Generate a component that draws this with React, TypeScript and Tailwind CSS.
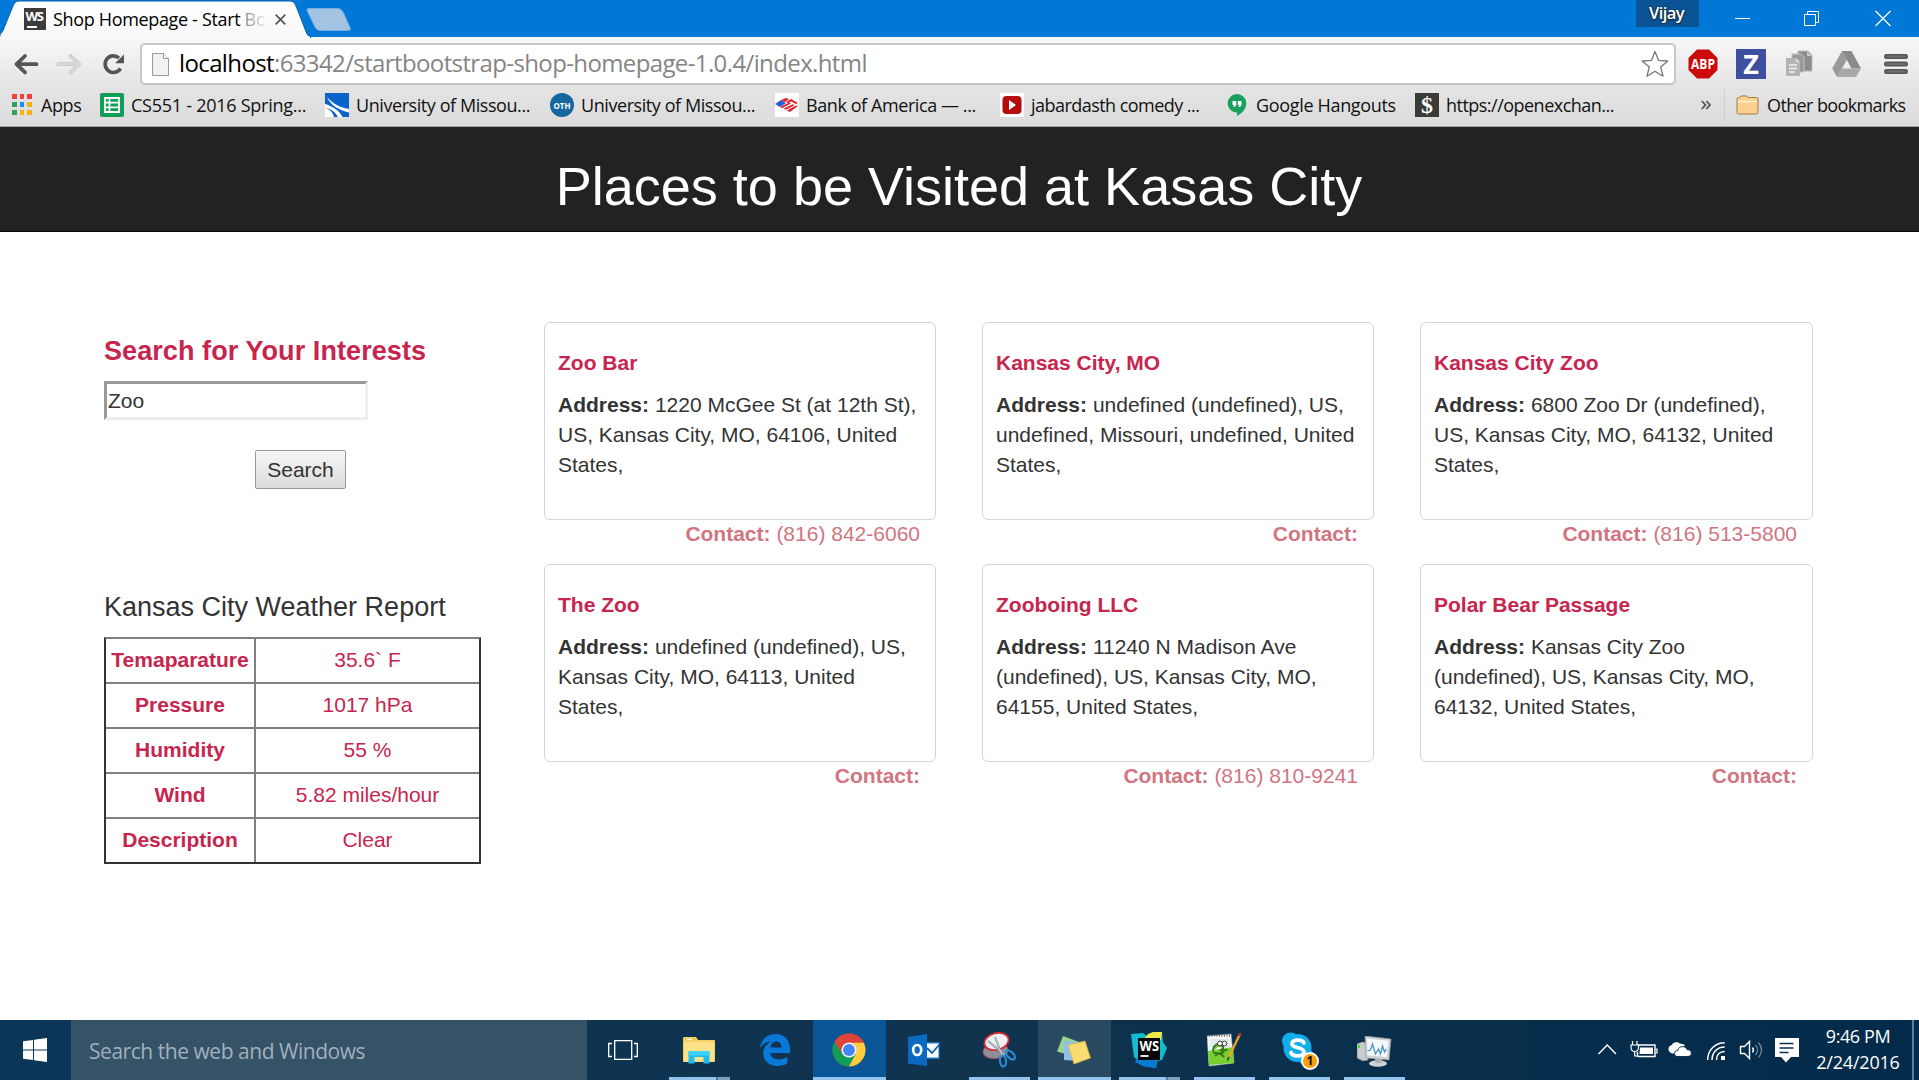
import type { ReactNode } from "react";

const places = [
  { name: "Zoo Bar", address: "1220 McGee St (at 12th St), US, Kansas City, MO, 64106, United States,", contact: "(816) 842-6060" },
  { name: "Kansas City, MO", address: "undefined (undefined), US, undefined, Missouri, undefined, United States,", contact: "" },
  { name: "Kansas City Zoo", address: "6800 Zoo Dr (undefined), US, Kansas City, MO, 64132, United States,", contact: "(816) 513-5800" },
  { name: "The Zoo", address: "undefined (undefined), US, Kansas City, MO, 64113, United States,", contact: "" },
  { name: "Zooboing LLC", address: "11240 N Madison Ave (undefined), US, Kansas City, MO, 64155, United States,", contact: "(816) 810-9241" },
  { name: "Polar Bear Passage", address: "Kansas City Zoo (undefined), US, Kansas City, MO, 64132, United States,", contact: "" },
];

const weather = [
  ["Temaparature", "35.6` F"],
  ["Pressure", "1017 hPa"],
  ["Humidity", "55 %"],
  ["Wind", "5.82 miles/hour"],
  ["Description", "Clear"],
];

/* ---------- Browser chrome ---------- */

function WsFavicon() {
  return (
    <div className="relative h-[22px] w-[22px] shrink-0 bg-[#3c3c3c]">
      <span className="absolute left-[1.5px] top-px font-['Open_Sans',sans-serif] text-[13px] font-bold leading-[14px] tracking-[-1.2px] text-white">WS</span>
      <span className="absolute bottom-[2.5px] left-[3px] h-[1.5px] w-[10px] bg-white" />
    </div>
  );
}

function TitleBar() {
  return (
    <div className="relative flex h-[37px] items-start bg-[#0078d7]">
      <svg className="absolute left-0 top-0" width="360" height="38" viewBox="0 0 360 38">
        <defs>
          <linearGradient id="tab" x1="0" y1="0" x2="0" y2="1">
            <stop offset="0" stopColor="#fff" />
            <stop offset="1" stopColor="#f8f8f8" />
          </linearGradient>
        </defs>
        <path d="M0 37.5V34c2-1 3-3 4-6L13 6c1.500-3.500 3-5 6-5h271c3 0 4.500 1.500 6 5l9 23c1.500 4 2.500 7 6 8.500z" fill="url(#tab)" stroke="#0a5fa8" strokeWidth="1" />
        <path d="M0 36.500h310V38H0z" fill="#f8f8f8" />
        <path d="M308.500 8.500H337c3.500 0 5 1.500 6.500 4.500l6.500 14.500c.8 2-.2 3-2 3h-27.500c-3 0-4.500-1.200-6-4.500l-7-14.500c-.9-2-.5-3 1-3z" fill="#a3c3e2" stroke="#79acdc" />
      </svg>
      <div className="relative ml-[24px] mt-[8px] flex h-[22px] items-center">
        <WsFavicon />
        <div className="ml-[7px] w-[211px] overflow-hidden whitespace-pre text-[18px] leading-[22px] tracking-[-0.34px] text-black">
          Shop Homepage - Start <span className="bg-gradient-to-r from-[#888] to-[#eee] bg-clip-text text-transparent">Bo</span>
        </div>
        <svg className="ml-[11px]" width="11" height="11" viewBox="0 0 11 11"><path d="M.7.700l9.600 9.600M10.300.700L.7 10.300" stroke="#555" strokeWidth="1.700" /></svg>
      </div>
      <div className="relative ml-auto mr-[36px] flex h-[27px] w-[63px] justify-center bg-[#0a5496]">
        <span className="-ml-[2px] text-[16.500px] font-semibold leading-[25px] tracking-[-0.6px] text-white [text-shadow:0_0_2px_#222,0_1px_2px_#222]">Vijay</span>
      </div>
      <svg className="relative mr-[28px]" width="156" height="37" viewBox="0 0 156 37" fill="none" stroke="#fff" strokeWidth="1">
        <path d="M0 18.500h15" />
        <path d="M69.500 14.500h11v11h-11zM72.500 14.500v-3h11v11h-3" />
        <path d="M140.500 11l15 15M155.500 11l-15 15" strokeWidth="1.200" />
      </svg>
    </div>
  );
}

function Toolbar() {
  return (
    <div className="flex h-[53px] items-start bg-gradient-to-b from-[#f8f8f8] to-[#e3e3e3]">
      <svg className="shrink-0" width="140" height="53" viewBox="0 0 140 53" fill="none">
        <path d="M36.500 27.200H18M25 19l-8.500 8.200 8.500 8.200" stroke="#555" strokeWidth="3.800" strokeLinecap="round" strokeLinejoin="round" />
        <path d="M58.500 27.200H78M70.500 19l8.500 8.200-8.500 8.200" stroke="#c4c4c4" strokeWidth="3.800" strokeLinecap="round" strokeLinejoin="round" />
        <path d="M58.500 27.200H78M70.500 19l8.500 8.200-8.500 8.200" stroke="#dadada" strokeWidth="2.200" strokeLinecap="round" strokeLinejoin="round" />
        <path d="M120.500 31.500a8.300 8.300 0 1 1-1.500-10.500" stroke="#555" strokeWidth="3.600" />
        <path d="M124 17.500v8.700h-9z" fill="#555" />
      </svg>
      <div className="mt-[6px] flex h-[42px] w-[1536px] shrink-0 items-center rounded-[5px] border-2 border-[#c6c6c6] bg-white">
        <svg className="ml-[10px]" width="17" height="23" viewBox="0 0 17 23"><path d="M.5.500h11l5 5v17H.5z" fill="#f2f2f2" stroke="#9a9a9a" /><path d="M11.500.500v5h5" fill="#fff" stroke="#9a9a9a" /></svg>
        <div className="-mt-[2px] ml-[10px] whitespace-nowrap text-[24px] leading-[36px] tracking-[-0.62px] text-[#858585]">
          <span className="text-black">localhost</span>:63342/startbootstrap-shop-homepage-1.0.4/index.html
        </div>
        <svg className="ml-auto mr-[5px]" width="28" height="28" viewBox="0 0 28 28"><path d="M14 1.500l3.600 8.900 9.200.6-7.100 6 2.300 9.200-8-5-8 5 2.300-9.200-7.100-6 9.200-.6z" fill="#fff" stroke="#777" strokeWidth="1.300" strokeLinejoin="round" /></svg>
      </div>
      <div className="ml-[12px] mt-[12px] flex h-[30px] items-center">
        <svg width="30" height="30" viewBox="0 0 30 30">
          <path d="M9 .5h12l8.500 8.500v12L21 29.500H9L.5 21V9z" fill="#cc0a0a" />
          <text x="15" y="19.700" textAnchor="middle" textLength="24" lengthAdjust="spacingAndGlyphs" fontFamily="Open Sans" fontWeight="700" fontSize="13.500" fill="#fff">ABP</text>
        </svg>
        <div className="ml-[18px] flex h-[30px] w-[30px] items-center justify-center bg-[#3f4fa0] text-[27px] font-bold leading-[30px] text-white">Z</div>
        <svg className="ml-[19px]" width="28" height="28" viewBox="0 0 28 28">
          <path d="M13 1h10l4 4v16H13z" fill="#8c8c8c" stroke="#b9b9b9" />
          <path d="M22 1v5h5" fill="#c8c8c8" />
          <path d="M7 4h9l3 3v15H7z" fill="#9a9a9a" stroke="#c2c2c2" />
          <path d="M1 8h10l4 4v14H1z" fill="#b4b4b4" />
          <path d="M11 8v4h4" fill="#dedede" />
          <path d="M4 15h8M4 18.500h8M4 22h6" stroke="#eee" strokeWidth="1.600" />
        </svg>
        <svg className="ml-[19px]" width="29" height="26" viewBox="0 0 29 26">
          <path d="M10 0l5 8.500L5.200 26 .2 17.400z" fill="#9a9a9a" />
          <path d="M10 0h9.500l9.500 17.400h-9.500z" fill="#8b8b8b" />
          <path d="M9.700 17.400H29L24 26H5.200z" fill="#a9a9a9" />
        </svg>
        <svg className="ml-[23px]" width="24" height="22" viewBox="0 0 24 22"><path d="M2.500 3.500h19M2.500 11h19M2.500 18.500h19" stroke="#555" strokeWidth="5" strokeLinecap="round" /><path d="M3 3.500h18M3 11h18M3 18.500h18" stroke="#6e6e6e" strokeWidth="2" strokeLinecap="round" /></svg>
      </div>
    </div>
  );
}

function Bookmark({ width, tracking, label, children }: { width: string; tracking: string; label: string; children: ReactNode }) {
  return (
    <div className={`flex shrink-0 items-center gap-[7px] ${width}`}>
      {children}
      <span className={`-mt-px whitespace-nowrap ${tracking}`}>{label}</span>
    </div>
  );
}

function BookmarksBar() {
  return (
    <div className="flex h-[37px] items-start border-b border-[#a0a0a0] bg-gradient-to-b from-[#e3e3e3] to-[#dcdcdc] text-[18px] leading-[24px] text-[#111]">
      <div className="mt-[3px] flex h-[24px] w-full items-center">
        <div className="ml-[12px] flex w-[88px] shrink-0 items-center gap-[9px]">
          <div className="-mt-px grid w-[20px] grid-cols-3 gap-[3px]">
            <i className="h-[5px] bg-[#f4403a]" /><i className="h-[5px] bg-[#f4403a]" /><i className="h-[5px] bg-[#f4403a]" />
            <i className="h-[5px] bg-[#2ea060]" /><i className="h-[5px] bg-[#1e88f5]" /><i className="h-[5px] bg-[#fbaf0a]" />
            <i className="h-[5px] bg-[#2ea060]" /><i className="h-[5px] bg-[#fbaf0a]" /><i className="h-[5px] bg-[#fbaf0a]" />
          </div>
          <span className="-mt-px tracking-[-0.4px]">Apps</span>
        </div>
        <Bookmark width="w-[225px]" tracking="tracking-[-0.26px]" label="CS551 - 2016 Spring...">
          <svg width="24" height="24" viewBox="0 0 24 24"><rect width="24" height="24" rx="2" fill="#0f9d58" /><path d="M5 5h14v14H5zM5 9.700h14M5 14.300h14M9.500 5v14" fill="none" stroke="#fff" strokeWidth="1.800" /></svg>
        </Bookmark>
        <Bookmark width="w-[225px]" tracking="tracking-[-0.43px]" label="University of Missou...">
          <svg width="24" height="24" viewBox="0 0 24 24"><path d="M0 0h24v24H0z" fill="#0a63c9" /><path d="M2 4c6 7 13 10.500 22 12v3.500C14 17 6 13 2 4z" fill="#fff" /><path d="M0 11c7 2 14 6 17.500 13H13C10 18 5 15.500 0 15z" fill="#fff" /><path d="M0 14.500c5 2 8 5 9 9.500H0z" fill="#fff" /></svg>
        </Bookmark>
        <Bookmark width="w-[225px]" tracking="tracking-[-0.43px]" label="University of Missou...">
          <svg width="24" height="24" viewBox="0 0 24 24"><circle cx="12" cy="12" r="12" fill="#14689f" /><text x="12" y="15.500" textAnchor="middle" textLength="17" lengthAdjust="spacingAndGlyphs" fontFamily="Open Sans" fontWeight="700" fontSize="9" fill="#fff">OTH</text></svg>
        </Bookmark>
        <Bookmark width="w-[225px]" tracking="tracking-[-0.42px]" label="Bank of America — ...">
          <svg width="24" height="24" viewBox="0 0 24 24"><path d="M0 0h24v24H0z" fill="#fff" /><path d="M0 11l6-4 5 3-6 4z" fill="#2a5bd0" /><path d="M6 7l5-2 3 1-4 3zM11 9l5-3 7 4-2 1-5-2.500L13 10z" fill="#e0202c" /><path d="M5 14l9-4.500 2 1L7.500 15zM8.500 15.800l9-4.500 2 1-8.500 4.400zM12 17.500l8-4.500 3.500-.5L15 19z" fill="#e0202c" /></svg>
        </Bookmark>
        <Bookmark width="w-[227px]" tracking="tracking-[-0.54px]" label="jabardasth comedy ...">
          <svg width="24" height="24" viewBox="0 0 24 24"><path d="M0 0h24v24H0z" fill="#fff" /><rect x="2.500" y="3" width="19" height="18" rx="4" fill="#b50d0d" /><path d="M9 7l7 5-7 5z" fill="#fff" /></svg>
        </Bookmark>
        <Bookmark width="w-[188px]" tracking="tracking-[-0.33px]" label="Google Hangouts">
          <svg width="22" height="24" viewBox="0 0 22 24"><path d="M10 1a9.300 9.300 0 0 0-9.300 9.300c0 5.200 4.300 9.200 9.300 9.200V23c5.500-2.700 9.300-7.600 9.300-12.700A9.300 9.300 0 0 0 10 1z" fill="#17a05e" /><path d="M5.500 8h3.700v4.200L7.500 14H6.200l.8-2H5.500zM10.800 8h3.700v4.200L12.800 14h-1.300l.8-2h-1.500z" fill="#fff" /></svg>
        </Bookmark>
        <Bookmark width="w-[286px]" tracking="tracking-[-0.52px]" label="https://openexchan...">
          <span className="flex h-[24px] w-[24px] items-center justify-center bg-[#3a3a36] font-['Liberation_Serif',serif] text-[24px] font-bold leading-[24px] text-white">$</span>
        </Bookmark>
        <svg className="shrink-0" width="10" height="10" viewBox="0 0 10 10" fill="none" stroke="#555" strokeWidth="1.800"><path d="M.8 1l3.700 4L.8 9M5.300 1L9 5 5.300 9" /></svg>
        <span className="ml-[13px] h-[32px] w-px shrink-0 bg-[#c4d0dc]" />
        <svg className="ml-[11px] shrink-0" width="23" height="20" viewBox="0 0 23 20"><path d="M1 4c0-1 .5-1.500 1.500-1.500H4L5 1h6l1 1.500h8.500c1 0 1.500.5 1.500 1.500v13.500c0 1-.5 1.500-1.500 1.500h-18C1.500 19 1 18.500 1 17.500z" fill="#f9d08e" stroke="#a57a45" /><path d="M2 6.500h19" stroke="#fce8c2" strokeWidth="2" /></svg>
        <span className="-mt-px ml-[8px] whitespace-nowrap tracking-[-0.62px]">Other bookmarks</span>
      </div>
    </div>
  );
}

/* ---------- Page ---------- */

function Sidebar() {
  return (
    <div className="w-[440px] shrink-0">
      <h3 className="mt-[14px] text-[27px] font-bold leading-[30px] tracking-[0.08px] text-[#c7254e]">Search for Your Interests</h3>
      <div className="mt-[15px] flex h-[39px] w-[264px] items-center border-[3px] border-b-[#eee] border-l-[#9a9a9a] border-r-[#eee] border-t-[#9a9a9a] bg-white pl-px text-[21px] leading-[30px] text-[#333]">Zoo</div>
      <button className="ml-[151px] mt-[30px] flex h-[39px] w-[91px] items-center justify-center rounded-[2px] border border-[#999] bg-gradient-to-b from-[#f6f6f6] to-[#dcdcdc] text-[21px] leading-[30px] text-[#333]">Search</button>
      <h3 className="mt-[103px] text-[27px] leading-[30px] text-[#333]">Kansas City Weather Report</h3>
      <div className="mt-[15px] grid w-[377px] grid-cols-[150px_1fr] border-2 border-[#333] border-t-[#808080] text-center text-[21px] leading-[30px] text-[#c7254e]">
        {weather.map(([label, value], i) => {
          const last = i === weather.length - 1;
          const cell = last ? "h-[43px] pt-[6px]" : "h-[45px] border-b-2 border-[#808080] pt-[6px]";
          return [
            <div key={label} className={`border-r-2 border-r-[#808080] font-bold ${cell}`}>{label}</div>,
            <div key={label + "v"} className={cell}>{value}</div>,
          ];
        })}
      </div>
    </div>
  );
}

function PlaceCard({ name, address, contact }: (typeof places)[number]) {
  return (
    <div className="h-[242px]">
      <div className="h-[198px] rounded-[6px] border border-[#d6d6d6] px-[13px] pt-[25px] text-[21px] leading-[30px] text-[#333]">
        <h4 className="font-bold text-[#c7254e]">{name}</h4>
        <p className="mt-[12px]"><b>Address:</b> {address}</p>
      </div>
      <p className="-mt-[1px] pr-[16px] text-right text-[21px] leading-[30px] text-[#d17581]"><b>Contact:</b>{contact && " " + contact}</p>
    </div>
  );
}

/* ---------- Taskbar ---------- */

function Task({ tile = "", line = "", split = false, children }: { tile?: string; line?: string; split?: boolean; children?: ReactNode }) {
  return (
    <div className={`relative mr-[2px] flex h-[60px] w-[73px] shrink-0 items-center justify-center ${tile}`}>
      {children}
      {line && (
        <span className={`absolute bottom-0 flex h-[3px] ${line}`}>
          <i className="flex-1 bg-[#93c4ee]" />
          {split && <><i className="w-[2px] bg-[#587993]" /><i className="w-[12px] bg-[#7ba0bd]" /></>}
        </span>
      )}
    </div>
  );
}

function Taskbar() {
  return (
    <div className="flex h-[60px] items-start bg-gradient-to-r from-[#0c3658] via-[#10334e] to-[#022a4a] text-white">
      <div className="flex h-[60px] w-[71px] items-center justify-center pr-[2px]">
        <svg width="24" height="24" viewBox="0 0 24 24" fill="#fff"><path d="M0 3.300L10 1.900v9.500H0zM11 1.800L24 0v11.400H11zM0 12.500h10V22L0 20.700zM11 12.500h13V24l-13-1.800z" /></svg>
      </div>
      <div className="flex h-[60px] w-[516px] items-center bg-[#355266] pl-[18px] text-[21px] tracking-[-0.46px] text-[#a0b0bd]"><span className="pt-[3px]">Search the web and Windows</span></div>
      <div className="mr-[3px] flex h-[60px] w-[73px] shrink-0 items-center justify-center">
        <svg className="-ml-[2px]" width="30" height="20" viewBox="0 0 30 20" fill="none" stroke="#fff" strokeWidth="1.300"><path d="M6.700.7h17v18.600h-17zM4 3.500H.7v13H4M26 3.500h3.300v13H26" /></svg>
      </div>
      <Task line="left-[6px] w-[61px]" split>
        <svg className="ml-[-1px] mt-[1px]" width="32" height="27" viewBox="0 0 32 27"><path d="M0 1.500C0 .7.500 0 1.500 0H13l2 3h16c.6 0 1 .5 1 1v20c0 .6-.4 1-1 1H1c-.600 0-1-.4-1-1z" fill="#f5cf60" /><path d="M1 5h30v19.500H1z" fill="#fbe28a" /><path d="M2 1.500h10l1 1.500H2z" fill="#f7b928" /><path d="M3.500 1.700h6v1.500h-6z" fill="#fff" /><path d="M5.500 26.500V15.500c0-1 .5-1.500 1.500-1.500h18c1 0 1.500.5 1.500 1.500v11H20.500V20h-9v6.500z" fill="#1fbcf0" /><path d="M5.500 18.500V15.500c0-1 .5-1.500 1.500-1.500h18c1 0 1.500.5 1.500 1.500v3z" fill="#3fd0fa" /></svg>
      </Task>
      <Task>
        <svg width="30" height="32" viewBox="0 0 30 32"><path d="M0 14.200C1.200 5.500 7.300 0 15.600 0 24.600 0 30 6.600 30 14.800v4.300H10.300c.3 4.400 4.200 6.300 8.700 6.300 3.100 0 6-.9 8.400-2.400v6.600c-2.700 1.600-6.200 2.400-9.700 2.400C9 32 3.300 27.200 3.300 19.300c0-5.200 2.900-9.400 8.400-12.100C6.600 7.400 2.600 10 0 14.200zM10.400 13.600h11.200c-.1-3.700-1.900-6-5.300-6-3.200 0-5.400 2.300-5.900 6z" fill="#0a78d9" /></svg>
      </Task>
      <Task tile="bg-[#0a5595]" line="left-0 w-full">
        <svg className="ml-[-1px]" width="34" height="34" viewBox="0 0 34 34"><circle cx="17" cy="17" r="16.500" fill="#db4437" /><path d="M17 17L2.700 8.750A16.500 16.500 0 0 0 17 33.500L24.100 21z" fill="#0f9d58" /><path d="M17 9.500h14.700A16.500 16.500 0 0 1 17 33.500L23.700 21z" fill="#ffcd40" /><path d="M2.700 8.750L10.200 21 17 17l-1-7.500h15.700A16.500 16.500 0 0 0 2.700 8.750z" fill="#db4437" /><circle cx="17" cy="17" r="7.600" fill="#f1f1f1" /><circle cx="17" cy="17" r="5.900" fill="#4285f4" /></svg>
      </Task>
      <Task>
        <svg className="ml-[-2px]" width="32" height="32" viewBox="0 0 32 32"><path d="M18 8h13.500v17H18z" fill="#1677c8" /><path d="M19 9.500h11.500v14H19z" fill="#fff" /><path d="M19 14l5 5 7-8" fill="none" stroke="#0f63b0" strokeWidth="1.800" /><path d="M0 3l19-3v32L0 29.500z" fill="#0a6ac0" /><ellipse cx="9.200" cy="16" rx="4" ry="5" fill="none" stroke="#fff" strokeWidth="2.700" /></svg>
      </Task>
      <Task line="left-[6px] w-[61px]">
        <svg className="ml-[-1px]" width="35" height="36" viewBox="0 0 35 36"><ellipse cx="13.500" cy="19" rx="12.500" ry="7.500" fill="#8c8f98" stroke="#a3525c" transform="rotate(-6 13.500 19)" /><ellipse cx="14.500" cy="9.500" rx="12.300" ry="8.300" fill="#eef1f4" stroke="#d22a35" strokeWidth="1.800" transform="rotate(-14 14.500 9.500)" /><path d="M6 9l17 14M13 5l7 18" stroke="#7d8790" strokeWidth="2" /><path d="M6 9l17 14M13 5l7 18" stroke="#dfe5e8" strokeWidth=".8" /><ellipse cx="28.500" cy="23" rx="3" ry="5.500" fill="none" stroke="#2b8cd6" strokeWidth="2.200" transform="rotate(-45 28.500 23)" /><ellipse cx="21" cy="29" rx="3" ry="5.500" fill="none" stroke="#2b8cd6" strokeWidth="2.200" transform="rotate(-5 21 29)" /></svg>
      </Task>
      <Task tile="bg-[#294a61]" line="left-0 w-full">
        <svg className="ml-[-2px]" width="34" height="28" viewBox="0 0 34 28"><path d="M6 0l16 6-6 14-16-4.500z" fill="#9ad492" /><path d="M7 5l15 1v19l-15-1z" fill="#8fc0ee" /><path d="M11 9l17-4 5.500 17L17 28z" fill="#f8dc72" stroke="#d9b23d" strokeWidth=".7" /></svg>
      </Task>
      <Task line="left-[6px] w-[61px]" split>
        <svg className="ml-[-1px]" width="36" height="38" viewBox="0 0 36 38"><path d="M0 3l12-1 5 4 14-5 1 10 4 6-5 12-5 1-1 7-13-2L3 26z" fill="#10bcd0" /><path d="M17 3l5-2h9l-1 8H12z" fill="#f0e94a" /><path d="M6 27l20-1-1 11-13-2-8-4z" fill="#087ad0" /><path d="M7 7h22v22H7z" fill="#060606" /><path d="M9.500 25h8" stroke="#fff" strokeWidth="1.800" /><text x="8.500" y="19.500" textLength="19.500" lengthAdjust="spacingAndGlyphs" fontFamily="Open Sans" fontWeight="700" fontSize="14" fill="#fff">WS</text></svg>
      </Task>
      <Task line="left-[6px] w-[61px]">
        <svg className="-mt-[1px] mr-[-3px] ml-[-4px]" width="35" height="34" viewBox="0 0 35 34"><path d="M0 3l24-2 3 29L2 33z" fill="#f5f7f5" stroke="#aab" strokeWidth=".6" /><path d="M1 18l25-4 1 16L2 32z" fill="#76cf2f" /><path d="M3 7h20M3 10h20M3 13h20" stroke="#b7cde0" strokeWidth=".8" /><path d="M2 2.500h22" stroke="#555" strokeWidth="2" strokeDasharray="1 1.500" /><path d="M6 18c0-5 4-8 8-6s2 4 0 5 5 1 6-1M6 19c3 2 8 2 11 0M8 23c3-3 6-3 9 1" fill="none" stroke="#35731a" strokeWidth="1.900" /><path d="M8 16c1-3 4-4 7-2" fill="none" stroke="#6fc63a" strokeWidth="1.600" /><circle cx="13" cy="10.500" r="2.400" fill="#fff" stroke="#222" strokeWidth=".9" /><circle cx="17.500" cy="10.500" r="2.300" fill="#fff" stroke="#222" strokeWidth=".9" /><path d="M32.500 2L22 24" stroke="#e9a32a" strokeWidth="2.400" /><path d="M33.500 0l-1.500 3" stroke="#c42b2b" strokeWidth="2.600" /><path d="M22 24l-1.500 3.500" stroke="#222" strokeWidth="1.300" /></svg>
      </Task>
      <Task line="left-[6px] w-[61px]">
        <svg className="ml-[1px] mt-[2px]" width="38" height="38" viewBox="0 0 38 38"><circle cx="16.500" cy="16" r="14" fill="#10aeea" /><circle cx="9.500" cy="9" r="8.500" fill="#10aeea" /><circle cx="24" cy="24" r="8.500" fill="#10aeea" /><path d="M23 11c-.8-3.500-12-4.500-12 .5 0 5.500 12 3 12 8.500 0 5-12 5-13 .5" fill="none" stroke="#fff" strokeWidth="3.800" strokeLinecap="round" /><circle cx="29" cy="29" r="9" fill="#fff" /><circle cx="29" cy="29" r="7" fill="#ff9d05" /><text x="29" y="33" textAnchor="middle" fontFamily="Open Sans" fontWeight="700" fontSize="12" fill="#111">1</text></svg>
      </Task>
      <Task line="left-[6px] w-[61px]">
        <svg className="ml-[-1px] mt-[2px]" width="35" height="31" viewBox="0 0 35 31"><path d="M0 8l5-2 6 1v17l-5 1-6-3z" fill="#c9cccf" stroke="#85898d" strokeWidth=".7" /><path d="M1 9h2v3H1z" fill="#43e02a" /><ellipse cx="21" cy="27.500" rx="9" ry="3.300" fill="#cfd3d6" /><path d="M18 22h7v5h-7z" fill="#aeb3b7" /><path d="M8 0l26 3-2 21-23-2z" fill="#cfd2d5" stroke="#8e9296" strokeWidth=".6" /><path d="M10 2.500l21.500 2.300L30 21l-19.500-1.700z" fill="#f3f8fb" /><path d="M10.500 15l3-1 2-6 3 10 3-5 2 5 2-8 2 6 2-3" fill="none" stroke="#4a93c4" strokeWidth="1.300" /></svg>
      </Task>
      <svg className="ml-[184px] shrink-0" width="203" height="60" viewBox="0 0 203 60" fill="none" stroke="#fff" strokeWidth="1.400">
        <path d="M1.500 34l8.700-9 8.800 9" />
        <path d="M41 25h17v11.500H40.500M40.500 36.500V32" />
        <path d="M43 27.500h13v6.500H42.500z" fill="#fff" stroke="none" />
        <path d="M58.500 29h1.500v4h-1.500M35.500 21v4M40 21v4M34 25h7.500v2c0 3-1.500 4.500-3.700 4.500S34 30 34 27zM37.700 31.500V36H41" strokeWidth="1.200" />
        <path d="M77 33.500c-3.500 0-5.500-2-5.500-4.500 0-2 1.300-3.600 3.300-4 1-2.500 5.300-4 8.200-1.200 2-.5 4.300.2 5 2.200-2.700.3-4.300 1.500-5 3.500-3 .3-4.500 1.500-6 4z" fill="#fff" stroke="none" />
        <path d="M80.500 36.500c-2 0-3-1.300-3-2.900s1.300-3 3.200-3c.5-2.800 2.500-4 4.800-4 2 0 3.800 1 4.500 3 2.700 0 4.400 1.500 4.400 3.500s-1.500 3.400-3.700 3.400z" fill="#fff" stroke="#0a3150" strokeWidth="1" />
        <path d="M110.700 40c0-9.500 7-17.300 17-17.300M115 40c0-7.500 5-13 12.700-13M119.500 40c0-5 3-8.500 8.200-8.500" strokeWidth="1.500" />
        <path d="M124 36h4v4h-4z" fill="#fff" stroke="none" />
        <path d="M143.500 26.500h4l5-5v17l-5-5h-4z" />
        <path d="M155.500 27.500c1 1.500 1 3.500 0 5" />
        <path d="M158.500 25c2.700 3 2.700 7 0 10M161.500 22.500c4 4.500 4 10.500 0 15" stroke="#6b8599" />
        <path d="M178 18h24v19h-8l-5 5.500-5-5.500h-6z" fill="#fff" stroke="none" />
        <path d="M182.500 23.500h14M182.500 28h14M182.500 32.500h9" stroke="#0a3150" strokeWidth="1.300" />
      </svg>
      <div className="ml-auto mr-[9px] w-[90px] pt-[3px] text-center text-[18px] leading-[26px]">
        <p className="tracking-[-0.4px]">9:46 PM</p>
        <p className="tracking-[-0.2px]">2/24/2016</p>
      </div>
      <span className="mr-[5px] h-[60px] w-[2px] bg-[#5f7d94]" />
    </div>
  );
}

export default function App() {
  return (
    <div className="flex h-[1080px] w-[1919px] flex-col overflow-hidden bg-white font-['Open_Sans',sans-serif]">
      <TitleBar />
      <Toolbar />
      <BookmarksBar />
      <header className="flex h-[105px] justify-center border-b border-[#080808] bg-[#222] pr-px pt-[23px] font-['Liberation_Sans',sans-serif]">
        <h1 className="text-[54px] leading-[72px] text-white">Places to be Visited at Kasas City</h1>
      </header>
      <main className="flex flex-1 pl-[104px] pt-[90px] font-['Liberation_Sans',sans-serif]">
        <Sidebar />
        <div className="grid h-[484px] grid-cols-[392px_392px_393px] gap-x-[46px]">
          {places.map((p) => <PlaceCard key={p.name} {...p} />)}
        </div>
      </main>
      <Taskbar />
    </div>
  );
}
